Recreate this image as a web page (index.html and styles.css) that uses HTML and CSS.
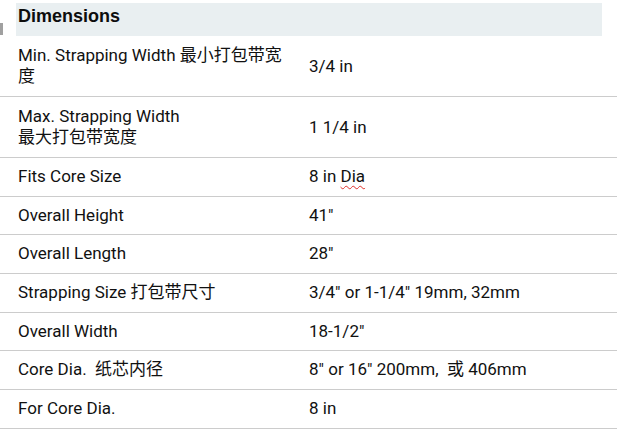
FILE: index.html
```html
<!DOCTYPE html>
<html lang="en">
<head>
<meta charset="utf-8">
<link rel="stylesheet" href="styles.css">
</head>
<body>
<div class="page">
  <div class="head-row">
    <span class="edge-mark"></span>
    <h2 class="section-title">Dimensions</h2>
  </div>
  <table class="specs">
    <tbody>
      <tr class="tall"><td class="label">Min. Strapping Width 最小打包带宽度</td><td class="value">3/4 in</td></tr>
      <tr class="tall"><td class="label">Max. Strapping Width<br>最大打包带宽度</td><td class="value">1 1/4 in</td></tr>
      <tr><td class="label">Fits Core Size</td><td class="value">8 in <span class="spell">Dia</span></td></tr>
      <tr><td class="label">Overall Height</td><td class="value">41"</td></tr>
      <tr><td class="label">Overall Length</td><td class="value">28"</td></tr>
      <tr><td class="label">Strapping Size 打包带尺寸</td><td class="value">3/4" or 1-1/4" 19mm, 32mm</td></tr>
      <tr><td class="label">Overall Width</td><td class="value">18-1/2"</td></tr>
      <tr><td class="label">Core Dia.&nbsp; 纸芯内径</td><td class="value">8" or 16" 200mm,&nbsp; 或 406mm</td></tr>
      <tr><td class="label">For Core Dia.</td><td class="value">8 in</td></tr>
    </tbody>
  </table>
</div>
</body>
</html>
```

FILE: styles.css
```css
html, body {
  margin: 0;
  padding: 0;
  background: #ffffff;
}

.page {
  width: 617px;
  color: #111111;
  font-family: Roboto, "Noto Sans CJK SC", sans-serif;
}

.head-row {
  display: flex;
  align-items: flex-end;
  padding-top: 3px;
}

.edge-mark {
  width: 3px;
  height: 12px;
  background: #a0a0a0;
  margin-right: 13px;
  margin-bottom: 1px;
}

.section-title {
  margin: 0;
  width: 586px;
  height: 33px;
  box-sizing: border-box;
  padding: 2px 0 0 2px;
  background: #e9eff1;
  font-family: "Liberation Sans", Arial, sans-serif;
  font-weight: bold;
  font-size: 18px;
  line-height: 22px;
  color: #0d0d0d;
}

.specs {
  width: 617px;
  border-collapse: collapse;
  font-size: 17px;
  line-height: 21px;
}

.specs td {
  padding: 8px 0 8.7px 0;
  border-bottom: 1px solid #cccccc;
  vertical-align: middle;
}

.specs .label {
  width: 270px;
  padding-left: 18px;
  padding-right: 21px;
}

.specs .tall td {
  padding-top: 9px;
  padding-bottom: 9px;
}

.spell {
  text-decoration: underline wavy #e0302a;
  text-decoration-thickness: 1px;
  text-underline-offset: 3px;
}
```
